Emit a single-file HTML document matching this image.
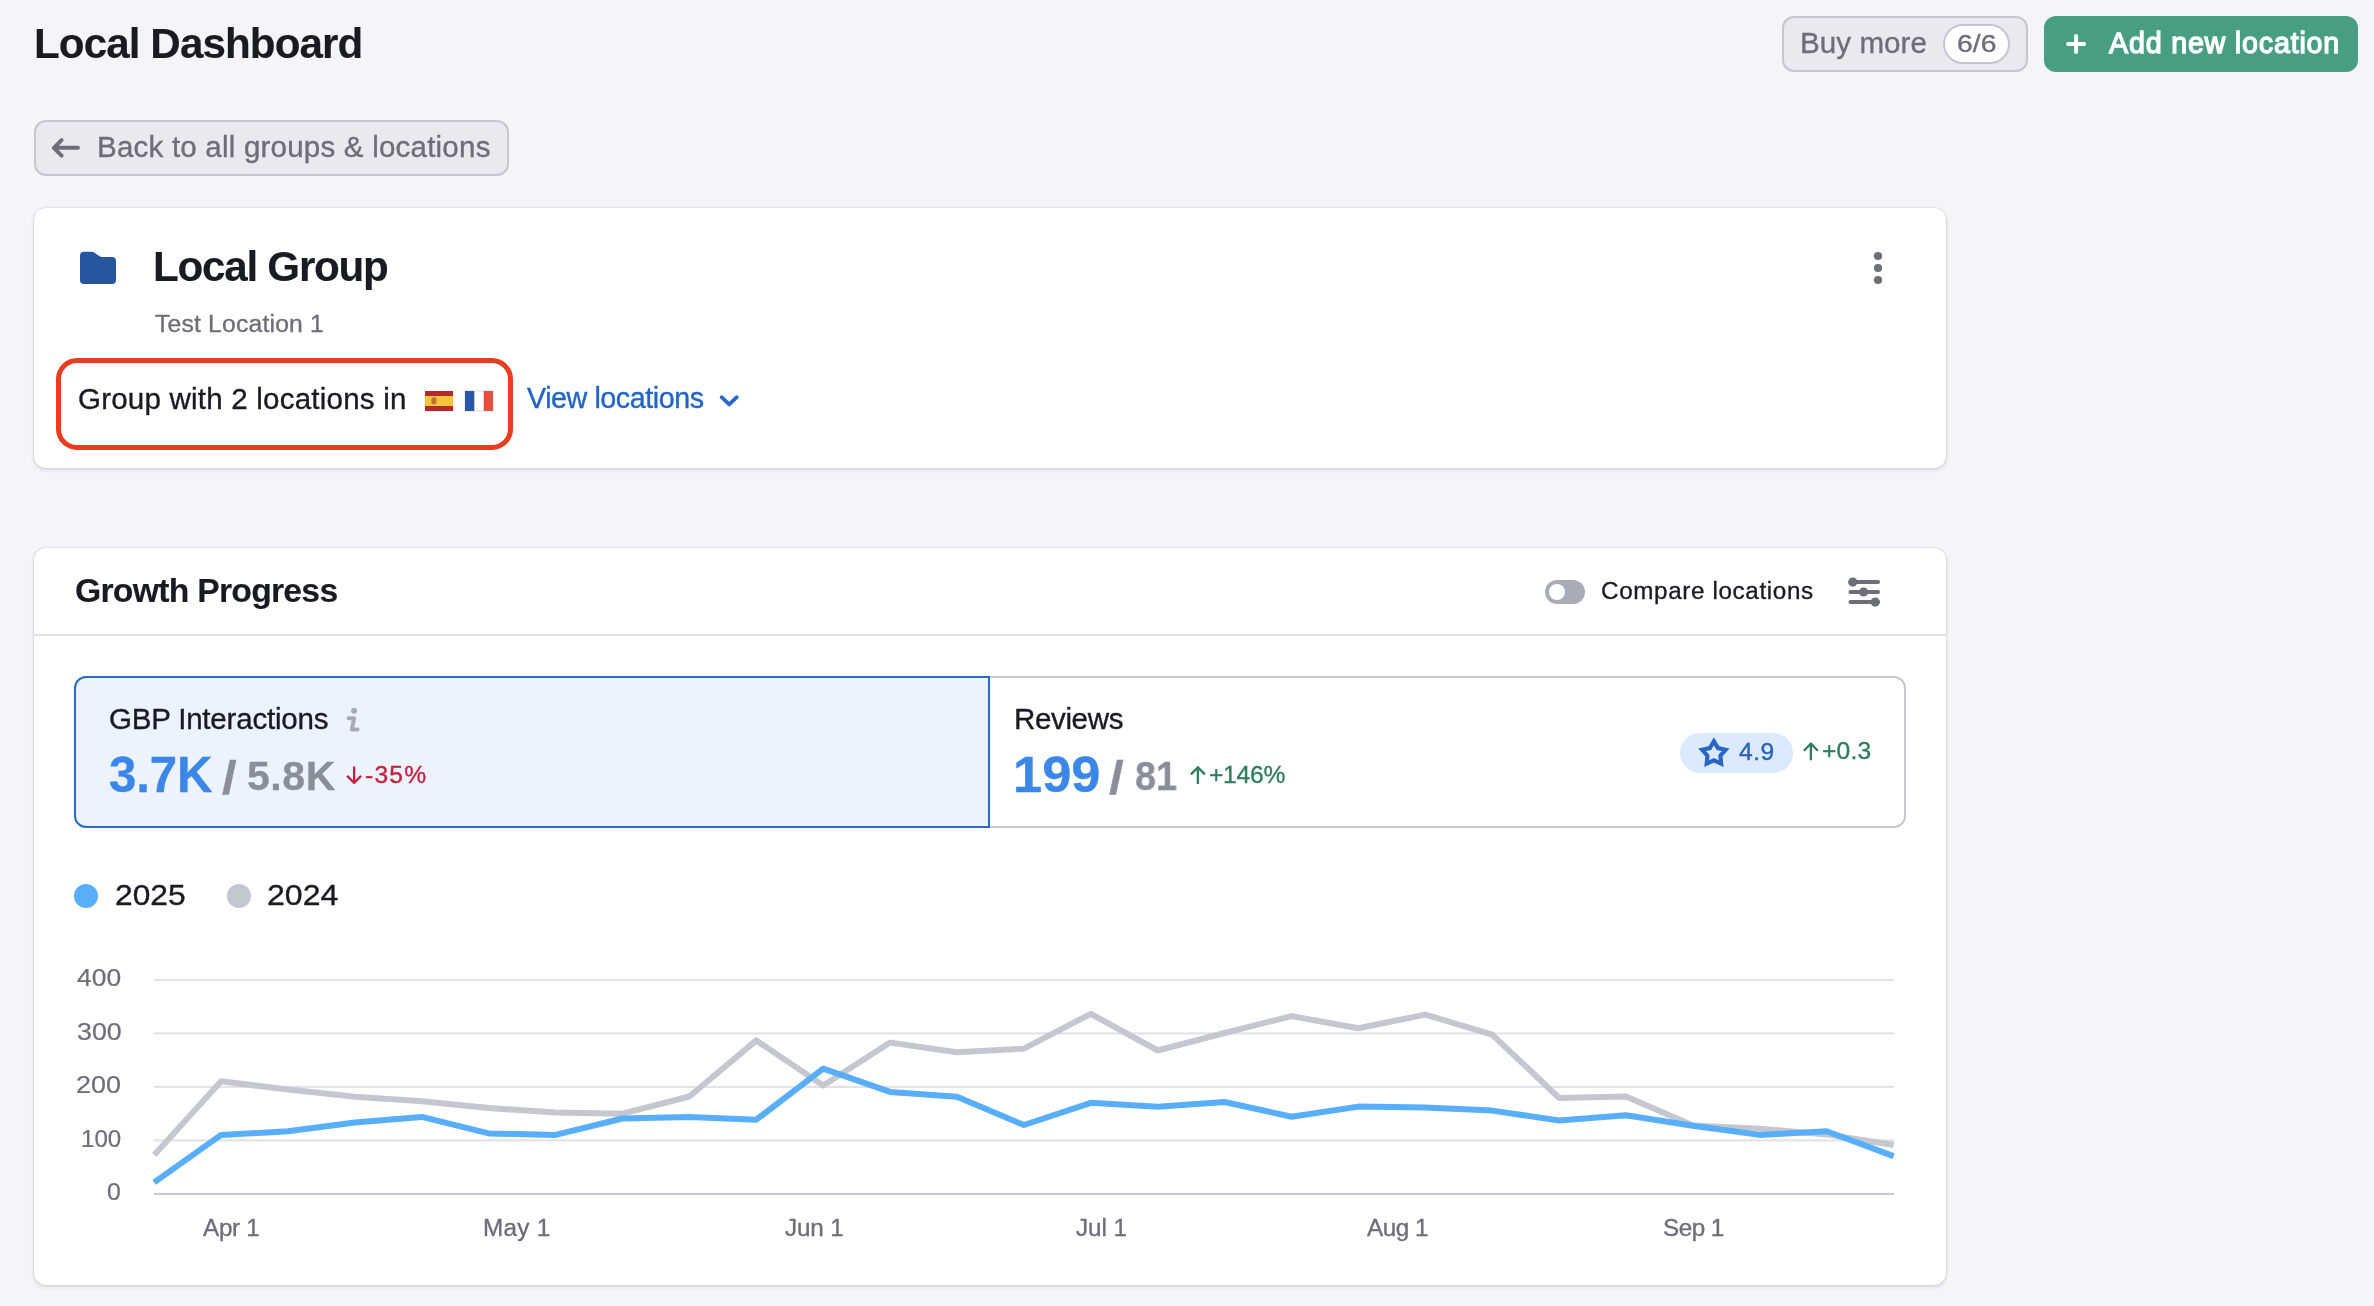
<!DOCTYPE html>
<html lang="en">
<head>
<meta charset="utf-8">
<title>Local Dashboard</title>
<style>
html,body{margin:0;padding:0}
body{width:2374px;height:1306px;background:#f4f5f9;position:relative;font-family:"Liberation Sans",Arial,Helvetica,sans-serif;}
.abs{position:absolute}
h1,h2{margin:0}
.t{position:absolute;line-height:1;white-space:pre;margin:0;will-change:transform;-webkit-text-stroke:0.35px currentColor}
.card{position:absolute;background:#fff;border-radius:12px;box-shadow:0 0 2px rgba(25,27,35,.22),0 2px 4px rgba(25,27,35,.12)}
.btn{position:absolute;box-sizing:border-box;border:2px solid #c4c7cf;background:#e9eaf0;border-radius:12px}
</style>
</head>
<body>
<!-- header buttons -->
<div class="btn" style="left:1782px;top:16px;width:246px;height:56px"></div>
<div class="abs" style="left:1943px;top:24px;width:67px;height:40px;box-sizing:border-box;border:2px solid #c4c7cf;border-radius:20px;background:#fff"></div>
<div class="abs" style="left:2044px;top:16px;width:314px;height:56px;border-radius:12px;background:#479e82"></div>
<div class="btn" style="left:34px;top:120px;width:475px;height:56px"></div>

<!-- cards -->
<div class="card" style="left:34px;top:208px;width:1912px;height:260px"></div>
<div class="card" style="left:34px;top:548px;width:1912px;height:737px"></div>
<div class="abs" style="left:34px;top:634px;width:1912px;height:2px;background:#e0e1e9"></div>

<!-- red highlight -->
<div class="abs" style="left:55.6px;top:358px;width:457.4px;height:92.1px;box-sizing:border-box;border:5px solid #e93d20;border-radius:21px"></div>

<!-- metric tabs -->
<div class="abs" style="left:988px;top:676px;width:918px;height:152px;box-sizing:border-box;border:2px solid #c4c7cf;border-radius:0 12px 12px 0;background:#fff"></div>
<div class="abs" style="left:74px;top:676px;width:916px;height:152px;box-sizing:border-box;border:2px solid #2b6bc4;border-radius:12px 0 0 12px;background:#ecf3fe"></div>
<div class="abs" style="left:1680px;top:733px;width:113px;height:40px;border-radius:20px;background:#dbeafe"></div>

<!-- legend dots / toggle -->
<div class="abs" style="left:74px;top:884px;width:24px;height:24px;border-radius:50%;background:#58aef8"></div>
<div class="abs" style="left:227px;top:884px;width:24px;height:24px;border-radius:50%;background:#c4c7cf"></div>
<div class="abs" style="left:1545px;top:580px;width:40px;height:24px;border-radius:12px;background:#a9abb6"></div>
<div class="abs" style="left:1548.5px;top:584px;width:16px;height:16px;border-radius:50%;background:#fff"></div>

<svg class="abs" style="left:0;top:0" width="2374" height="1306" viewBox="0 0 2374 1306">
<rect x="154" y="978.9" width="1740" height="2" fill="#e0e1e9"/><rect x="154" y="1032.4" width="1740" height="2" fill="#e0e1e9"/><rect x="154" y="1085.9" width="1740" height="2" fill="#e0e1e9"/><rect x="154" y="1139.4" width="1740" height="2" fill="#e0e1e9"/><rect x="154" y="1192.9" width="1740" height="2" fill="#c4c7cf"/>
<polyline points="154.2,1155.1 221.1,1081.3 288.0,1089.6 354.9,1096.7 421.8,1101.3 488.7,1108.1 555.6,1112.4 622.5,1113.7 689.4,1096.5 756.3,1040.4 823.2,1085.6 890.1,1042.6 957.0,1052.2 1023.9,1048.7 1090.8,1013.8 1157.7,1050.5 1224.6,1033.0 1291.5,1016.1 1358.4,1028.2 1425.3,1014.6 1492.2,1034.6 1559.1,1098.0 1626.0,1096.5 1692.9,1125.5 1759.8,1128.8 1826.7,1134.4 1893.6,1145.0" fill="none" stroke="#c4c7cf" stroke-width="6" stroke-linejoin="round"/>
<polyline points="154.2,1182.4 221.1,1134.9 288.0,1131.3 354.9,1122.5 421.8,1116.9 488.7,1133.4 555.6,1134.9 622.5,1118.5 689.4,1116.9 756.3,1119.7 823.2,1068.7 890.1,1091.9 957.0,1096.7 1023.9,1125.0 1090.8,1102.8 1157.7,1106.8 1224.6,1102.0 1291.5,1116.7 1358.4,1106.6 1425.3,1107.6 1492.2,1110.6 1559.1,1120.5 1626.0,1115.2 1692.9,1125.8 1759.8,1134.9 1826.7,1131.3 1893.6,1156.1" fill="none" stroke="#58aef8" stroke-width="6" stroke-linejoin="round"/>
</svg>

<!-- icons -->
<svg class="abs" style="left:0;top:0" width="2374" height="1306" viewBox="0 0 2374 1306" fill="none">
  <!-- back arrow -->
  <path d="M77.9 147.8H54M61.6 140.1L53.8 147.8l7.8 7.8" stroke="#6c6e79" stroke-width="4" stroke-linecap="round" stroke-linejoin="round"/>
  <!-- plus -->
  <path d="M2068.1 44.1h16M2076.1 36.1v16" stroke="#fff" stroke-width="4" stroke-linecap="round"/>
  <!-- folder -->
  <path d="M84 251.8h7.6c1.1 0 2.1.3 3 .9l4.6 3.3c.9.6 1.9.9 3 .9H112a4 4 0 0 1 4 4V280a4 4 0 0 1-4 4H84a4 4 0 0 1-4-4v-24.2a4 4 0 0 1 4-4z" fill="#25569e"/>
  <!-- kebab -->
  <circle cx="1878" cy="256" r="4.1" fill="#6c6e79"/><circle cx="1878" cy="268" r="4.1" fill="#6c6e79"/><circle cx="1878" cy="280" r="4.1" fill="#6c6e79"/>
  <!-- spain -->
  <rect x="425" y="391" width="28" height="20" fill="#f4c43c"/>
  <rect x="425" y="391" width="28" height="5" fill="#b8272c"/><rect x="425" y="406" width="28" height="5" fill="#b8272c"/>
  <rect x="431.4" y="397.6" width="5" height="6.6" rx="1.6" fill="#b5603a" opacity=".85"/>
  <!-- france -->
  <rect x="465" y="391" width="28" height="20" fill="#fff" stroke="#d3d5db" stroke-width="0.8"/>
  <rect x="465" y="391" width="9.3" height="20" fill="#2a56a5"/><rect x="483.7" y="391" width="9.3" height="20" fill="#e2503f"/>
  <!-- chevron -->
  <path d="M721.6 397.2l7.6 7.2 7.6-7.2" stroke="#2b68c8" stroke-width="3.8" stroke-linecap="round" stroke-linejoin="round"/>
  <!-- settings -->
  <g stroke="#6c6e79" stroke-width="4" stroke-linecap="round"><path d="M1850.5 582.1h27.5M1850.5 592h27.5M1850.5 602.1h27.5"/></g>
  <circle cx="1852.8" cy="582.1" r="4.6" fill="#6c6e79"/><circle cx="1863.6" cy="592" r="4.6" fill="#6c6e79"/><circle cx="1875.2" cy="602.1" r="4.6" fill="#6c6e79"/>
  <!-- info i -->
  <circle cx="354.1" cy="710.7" r="3" fill="#a9abb6"/>
  <path d="M348.6 718.2h5.6l-2.4 11.2h5.8" stroke="#a9abb6" stroke-width="4" stroke-linecap="round" stroke-linejoin="round"/>
  <!-- down arrow red -->
  <path d="M354.1 766.4v16.4M347.1 775.9l7 7 7-7" stroke="#c4213c" stroke-width="2.3"/>
  <!-- up arrow green (reviews) -->
  <path d="M1197.9 783.9v-16.4M1190.9 774.4l7-7 7 7" stroke="#2f7d5c" stroke-width="2.3"/>
  <!-- up arrow green (rating) -->
  <path d="M1810.9 760.2v-16.4M1803.9 750.7l7-7 7 7" stroke="#2f7d5c" stroke-width="2.3"/>
  <!-- star -->
  <path id="star" d="M1713.9 741.3L1717.9 748.1L1725.6 749.8L1720.4 755.7L1721.1 763.6L1713.9 760.4L1706.7 763.6L1707.4 755.7L1702.2 749.8L1709.9 748.1Z" stroke="#2c66c3" stroke-width="4.2" stroke-linejoin="miter" stroke-miterlimit="10"/>
</svg>

<header>
<h1 class="t" style="left:33.55px;top:22.68px;font-size:42.2px;font-weight:700;color:#191b23;letter-spacing:-0.925px;-webkit-text-stroke:0.12px currentColor;">Local Dashboard</h1>
<span class="t" style="left:97.40px;top:131.99px;font-size:29.54px;font-weight:400;color:#6c6e79;letter-spacing:0.207px;">Back to all groups &amp; locations</span>
<span class="t" style="left:1799.50px;top:27.69px;font-size:29.54px;font-weight:400;color:#6c6e79;letter-spacing:0.079px;">Buy more</span>
<div class="t" style="left:1956.56px;top:31.98px;font-size:24.6px;font-weight:400;color:#6c6e79;letter-spacing:0.000px;transform:scaleX(1.153);transform-origin:0 0;">6/6</div>
<span class="t" style="left:2109.30px;top:28.71px;font-size:28.7px;font-weight:400;color:#ffffff;letter-spacing:0.783px;-webkit-text-stroke:1.3px #fff;">Add new location</span>
</header>
<main>
<section aria-label="Local Group">
<h2 class="t" style="left:153.05px;top:245.78px;font-size:42.2px;font-weight:700;color:#191b23;letter-spacing:-1.260px;-webkit-text-stroke:0.12px currentColor;">Local Group</h2>
<div class="t" style="left:155.30px;top:311.70px;font-size:24.69px;font-weight:400;color:#6c6e79;letter-spacing:0.196px;">Test Location 1</div>
<div class="t" style="left:78.20px;top:383.99px;font-size:29.54px;font-weight:400;color:#191b23;letter-spacing:0.208px;">Group with 2 locations in</div>
<span class="t" style="left:527.15px;top:383.71px;font-size:28.7px;font-weight:400;color:#2264c6;letter-spacing:-0.442px;">View locations</span>
</section>
<section aria-label="Growth Progress">
<h2 class="t" style="left:74.55px;top:574.42px;font-size:33.76px;font-weight:700;color:#191b23;letter-spacing:-0.761px;-webkit-text-stroke:0.12px currentColor;">Growth Progress</h2>
<div class="t" style="left:1601.15px;top:579.46px;font-size:24.26px;font-weight:400;color:#191b23;letter-spacing:0.622px;">Compare locations</div>
<div class="t" style="left:108.50px;top:703.89px;font-size:29.54px;font-weight:400;color:#191b23;letter-spacing:-0.217px;">GBP Interactions</div>
<div class="t" style="left:109.35px;top:750.25px;font-size:49.2px;font-weight:700;color:#3a87e8;letter-spacing:-0.100px;">3.7K</div>
<div class="t" style="left:222.03px;top:754.84px;font-size:46.5px;font-weight:700;color:#8a8e9b;letter-spacing:0.000px;transform:scaleX(1.133);transform-origin:0 0;">/</div>
<div class="t" style="left:247.45px;top:756.29px;font-size:41.0px;font-weight:700;color:#8a8e9b;letter-spacing:0.567px;">5.8K</div>
<div class="t" style="left:364.70px;top:763.18px;font-size:24.6px;font-weight:400;color:#c4213c;letter-spacing:1.200px;">-35%</div>
<div class="t" style="left:1013.80px;top:703.89px;font-size:29.54px;font-weight:400;color:#191b23;letter-spacing:-0.367px;">Reviews</div>
<div class="t" style="left:1013.10px;top:750.25px;font-size:49.2px;font-weight:700;color:#3a87e8;letter-spacing:0.000px;transform:scaleX(1.065);transform-origin:0 0;">199</div>
<div class="t" style="left:1109.23px;top:754.84px;font-size:46.5px;font-weight:700;color:#8a8e9b;letter-spacing:0.000px;transform:scaleX(1.142);transform-origin:0 0;">/</div>
<div class="t" style="left:1134.85px;top:756.29px;font-size:41.0px;font-weight:700;color:#8a8e9b;letter-spacing:0.000px;transform:scaleX(0.923);transform-origin:0 0;">81</div>
<div class="t" style="left:1209.25px;top:763.18px;font-size:24.6px;font-weight:400;color:#2f7d5c;letter-spacing:-0.238px;">+146%</div>
<div class="t" style="left:1738.90px;top:739.68px;font-size:24.6px;font-weight:400;color:#2a62b8;letter-spacing:0.500px;">4.9</div>
<div class="t" style="left:1822.05px;top:739.38px;font-size:24.6px;font-weight:400;color:#2f7d5c;letter-spacing:0.217px;">+0.3</div>
<div class="t" style="left:115.34px;top:880.61px;font-size:28.7px;font-weight:400;color:#191b23;letter-spacing:0.000px;transform:scaleX(1.105);transform-origin:0 0;">2025</div>
<div class="t" style="left:267.22px;top:880.61px;font-size:28.7px;font-weight:400;color:#191b23;letter-spacing:0.000px;transform:scaleX(1.117);transform-origin:0 0;">2024</div>
<div role="img" aria-label="GBP Interactions chart, 2025 vs 2024">
<div class="t" style="left:77.13px;top:967.10px;font-size:23.16px;font-weight:400;color:#6c6e79;letter-spacing:0.000px;transform:scaleX(1.141);transform-origin:0 0;-webkit-text-stroke:0.2px currentColor;">400</div>
<div class="t" style="left:76.54px;top:1020.60px;font-size:23.16px;font-weight:400;color:#6c6e79;letter-spacing:0.000px;transform:scaleX(1.156);transform-origin:0 0;-webkit-text-stroke:0.2px currentColor;">300</div>
<div class="t" style="left:76.24px;top:1074.10px;font-size:23.16px;font-weight:400;color:#6c6e79;letter-spacing:0.000px;transform:scaleX(1.164);transform-origin:0 0;-webkit-text-stroke:0.2px currentColor;">200</div>
<div class="t" style="left:80.88px;top:1127.60px;font-size:23.16px;font-weight:400;color:#6c6e79;letter-spacing:0.000px;transform:scaleX(1.042);transform-origin:0 0;-webkit-text-stroke:0.2px currentColor;">100</div>
<div class="t" style="left:107.33px;top:1181.10px;font-size:23.16px;font-weight:400;color:#6c6e79;letter-spacing:0.000px;transform:scaleX(1.073);transform-origin:0 0;-webkit-text-stroke:0.2px currentColor;">0</div>
<div class="t" style="left:202.55px;top:1215.86px;font-size:24.26px;font-weight:400;color:#6c6e79;letter-spacing:-0.275px;">Apr 1</div>
<div class="t" style="left:483.40px;top:1215.86px;font-size:24.26px;font-weight:400;color:#6c6e79;letter-spacing:0.300px;">May 1</div>
<div class="t" style="left:784.90px;top:1215.86px;font-size:24.26px;font-weight:400;color:#6c6e79;letter-spacing:-0.137px;">Jun 1</div>
<div class="t" style="left:1075.90px;top:1215.86px;font-size:24.26px;font-weight:400;color:#6c6e79;letter-spacing:-0.075px;">Jul 1</div>
<div class="t" style="left:1367.15px;top:1215.86px;font-size:24.26px;font-weight:400;color:#6c6e79;letter-spacing:-0.450px;">Aug 1</div>
<div class="t" style="left:1663.40px;top:1215.86px;font-size:24.26px;font-weight:400;color:#6c6e79;letter-spacing:-0.513px;">Sep 1</div>
</div>
</section>
</main>
</body>
</html>
